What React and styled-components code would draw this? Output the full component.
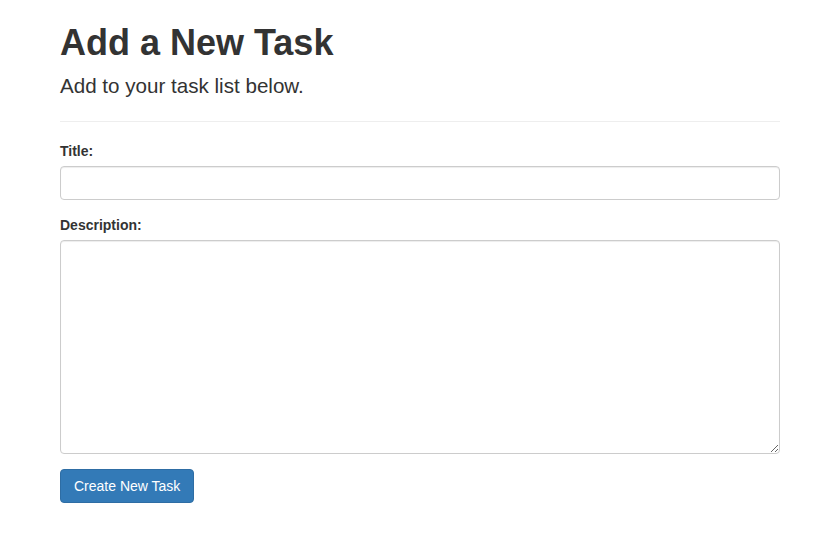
import React from "react";
import styled, { createGlobalStyle } from "styled-components";

const GlobalStyle = createGlobalStyle`
  * { box-sizing: border-box; }
  body {
    margin: 0;
    background: #fff;
    font-family: "Liberation Sans", Arial, Helvetica, sans-serif;
    color: #333;
  }
`;

const Container = styled.div`
  width: 720px;
  margin-left: 60px;
  padding-top: 23px;
`;

const Header = styled.div`
  padding-bottom: 21px;
  border-bottom: 1px solid #eee;
  margin-bottom: 19px;
`;

const Title = styled.h1`
  margin: 0;
  font-size: 36px;
  font-weight: 700;
  line-height: 1.1;
  color: #333;
`;

const Lead = styled.p`
  margin: 9px 0 0;
  font-size: 20.6px;
  font-weight: 300;
  line-height: 28px;
  color: #333;
`;

const Form = styled.form`
  display: flex;
  flex-direction: column;
`;

const Group = styled.div`
  display: flex;
  flex-direction: column;
  margin-bottom: 15px;
`;

const Label = styled.label`
  font-size: 14px;
  font-weight: 700;
  line-height: 20px;
  margin-bottom: 5px;
`;

const Input = styled.input`
  height: 34px;
  padding: 6px 12px;
  font-size: 14px;
  font-family: inherit;
  border: 1px solid #ccc;
  border-radius: 4px;
  box-shadow: inset 0 1px 1px rgba(0, 0, 0, 0.075);
`;

const TextArea = styled.textarea`
  height: 214px;
  padding: 6px 12px;
  font-size: 14px;
  font-family: inherit;
  border: 1px solid #ccc;
  border-radius: 4px;
  box-shadow: inset 0 1px 1px rgba(0, 0, 0, 0.075);
  resize: vertical;
`;

const Button = styled.button`
  align-self: flex-start;
  height: 34px;
  padding: 0 13px;
  font-size: 14px;
  font-family: inherit;
  color: #fff;
  background: #337ab7;
  border: 1px solid #2e6da4;
  border-radius: 4px;
  cursor: pointer;
`;

export default function App() {
  return (
    <>
      <GlobalStyle />
      <Container>
        <Header>
          <Title>Add a New Task</Title>
          <Lead>Add to your task list below.</Lead>
        </Header>
        <Form onSubmit={(e) => e.preventDefault()}>
          <Group>
            <Label htmlFor="title">Title:</Label>
            <Input id="title" type="text" />
          </Group>
          <Group>
            <Label htmlFor="description">Description:</Label>
            <TextArea id="description" />
          </Group>
          <Button type="submit">Create New Task</Button>
        </Form>
      </Container>
    </>
  );
}
